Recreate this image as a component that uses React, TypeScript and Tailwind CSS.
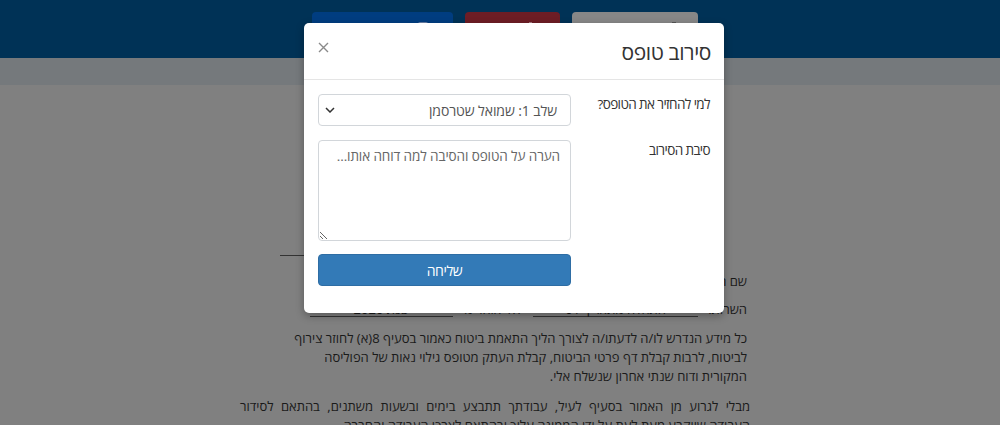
import React from "react";

export default function App() {
  const font = { fontFamily: '"Open Sans", "Liberation Sans", "DejaVu Sans", sans-serif' };
  return (
    <div className="relative w-[1000px] h-[425px] overflow-hidden bg-[#808080]" style={font}>
      {/* top bar */}
      <div className="h-[58px] bg-[#003256] flex items-start pt-[12px] pl-[312px] gap-[12px]">
        <div className="w-[141px] h-[36px] rounded-[4px] bg-[#003d80] flex justify-end pr-[25px] pt-[10px]">
          <span className="w-[10px] h-[12px] rounded-[2px] bg-[#6a7fa6]" />
        </div>
        <div className="w-[95px] h-[36px] rounded-[4px] bg-[#6d1d25] flex justify-end pr-[28px] pt-[10px]">
          <span className="w-[3px] h-[12px] bg-[#a5777c]" />
        </div>
        <div className="w-[126px] h-[36px] rounded-[4px] bg-[#878787] flex justify-end pr-[22px] pt-[10px]">
          <span className="w-[4px] h-[12px] bg-[#555]" />
        </div>
      </div>
      <div className="h-[27px] bg-[#75797c]" />

      {/* background document */}
      <div dir="rtl" className="w-[510px] ml-[240px] mt-[155px] text-[13px] leading-[19px] text-[#1a1a1a]">
        <div dir="ltr" className="h-[16px] pl-[40px] flex items-end">
          <span className="inline-block w-[25px] h-[1px] bg-[#333]" />
        </div>
        <div className="mt-[16px] pr-[3px]">שם המבוטח: ישראל ישראלי</div>
        <div className="mt-[11px] h-[17px] flex items-start pr-[3px] leading-[14px]">
          <span>השרות:</span>
          <span className="w-[165px] h-[15px] border-b border-[#333] mr-[10px] text-center">התחלה מתאריך 01</span>
          <span className="w-[80px] text-center">לא יאוחר מ</span>
          <span className="w-[143px] h-[15px] border-b border-[#333] text-center">שנת 2020</span>
        </div>
        <p className="mt-[10px] pr-[3px] whitespace-nowrap">
          כל מידע הנדרש לו/ה לדעתו/ה לצורך הליך התאמת ביטוח כאמור בסעיף 8(א) לחוזר צירוף
          <br />
          לביטוח, לרבות קבלת דף פרטי הביטוח, קבלת העתק מטופס גילוי נאות של הפוליסה
          <br />
          המקורית ודוח שנתי אחרון שנשלח אלי.
        </p>
        <p className="mt-[11px] text-justify [text-align-last:justify]">
          מבלי לגרוע מן האמור בסעיף לעיל, עבודתך תתבצע בימים ובשעות משתנים, בהתאם לסידור
        </p>
        <p className="text-justify">
          העבודה שייקבע מעת לעת על ידי הממונה עליך ובהתאם לצרכי העבודה והחברה.
        </p>
      </div>

      {/* modal */}
      <div dir="rtl" className="absolute left-[304px] top-[23px] w-[420px] h-[290px] bg-white rounded-[5px] shadow-[0_3px_9px_rgba(0,0,0,0.3)]">
        <div className="h-[57px] border-b border-[#e5e5e5] flex items-center justify-between px-[13px]">
          <h4 className="text-[21px] leading-[30px] tracking-[-0.4px] text-[#333] mt-[1px]">סירוב טופס</h4>
          <svg width="11" height="11" viewBox="0 0 11 11" className="ml-[1px] mb-[8px]">
            <path d="M1 1L10 10M10 1L1 10" stroke="#8a8a8a" strokeWidth="1.4" />
          </svg>
        </div>
        <div className="px-[14px] pt-[14px]">
          <div className="flex">
            <label className="flex-1 text-[13.5px] leading-[18px] tracking-[-0.6px] text-[#333] pt-[1px]">למי להחזיר את הטופס?</label>
            <div className="w-[253px] h-[32px] border border-[#d2d6da] rounded-[4px] flex items-center justify-between pr-[13px] pl-[6px]">
              <span className="text-[14px] tracking-[-0.1px] text-[#555]">שלב 1: שמואל שטרסמן</span>
              <svg width="10" height="6" viewBox="0 0 10 6">
                <path d="M1 1L5 5L9 1" fill="none" stroke="#333" strokeWidth="1.5" />
              </svg>
            </div>
          </div>
          <div className="flex mt-[14px]">
            <label className="flex-1 text-[13.5px] leading-[18px] tracking-[-0.6px] text-[#333] pt-[1px]">סיבת הסירוב</label>
            <textarea
              dir="rtl"
              className="w-[253px] h-[101px] border border-[#d2d6da] rounded-[4px] px-[10px] py-[5px] text-[13.5px] leading-[20px] tracking-[-0.1px] text-[#555] placeholder:text-[#666] outline-none resize-y"
              placeholder="הערה על הטופס והסיבה למה דוחה אותו..."
              style={font}
            />
          </div>
          <div className="flex justify-end mt-[13px]">
            <button className="w-[253px] h-[32px] rounded-[4px] bg-[#337ab7] border border-[#2e6da4] text-white text-[14px] tracking-[-0.4px]" style={font}>
              שליחה
            </button>
          </div>
        </div>
      </div>
    </div>
  );
}
